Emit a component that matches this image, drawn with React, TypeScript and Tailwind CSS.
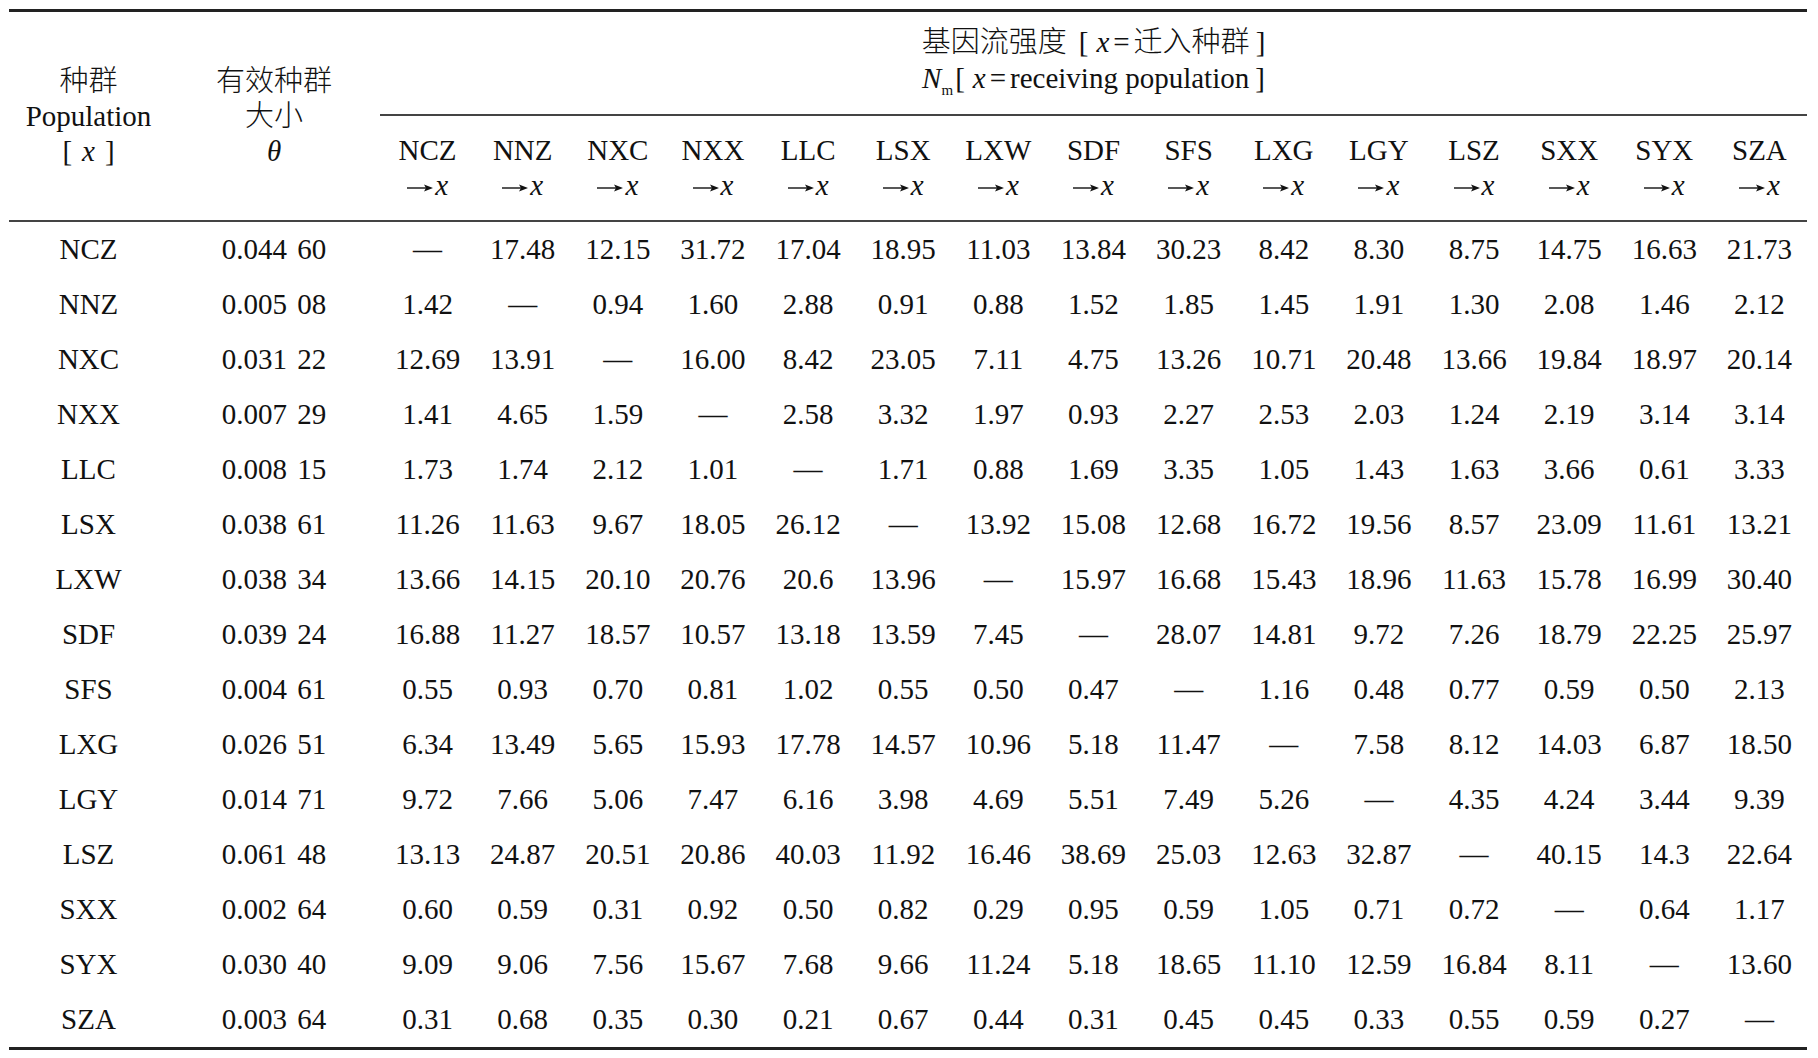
import React from "react";

const cols = ["NCZ", "NNZ", "NXC", "NXX", "LLC", "LSX", "LXW", "SDF", "SFS", "LXG", "LGY", "LSZ", "SXX", "SYX", "SZA"];

const D = "—";

const rows: [string, string, string[]][] = [
  ["NCZ", "0.044 60", [D, "17.48", "12.15", "31.72", "17.04", "18.95", "11.03", "13.84", "30.23", "8.42", "8.30", "8.75", "14.75", "16.63", "21.73"]],
  ["NNZ", "0.005 08", ["1.42", D, "0.94", "1.60", "2.88", "0.91", "0.88", "1.52", "1.85", "1.45", "1.91", "1.30", "2.08", "1.46", "2.12"]],
  ["NXC", "0.031 22", ["12.69", "13.91", D, "16.00", "8.42", "23.05", "7.11", "4.75", "13.26", "10.71", "20.48", "13.66", "19.84", "18.97", "20.14"]],
  ["NXX", "0.007 29", ["1.41", "4.65", "1.59", D, "2.58", "3.32", "1.97", "0.93", "2.27", "2.53", "2.03", "1.24", "2.19", "3.14", "3.14"]],
  ["LLC", "0.008 15", ["1.73", "1.74", "2.12", "1.01", D, "1.71", "0.88", "1.69", "3.35", "1.05", "1.43", "1.63", "3.66", "0.61", "3.33"]],
  ["LSX", "0.038 61", ["11.26", "11.63", "9.67", "18.05", "26.12", D, "13.92", "15.08", "12.68", "16.72", "19.56", "8.57", "23.09", "11.61", "13.21"]],
  ["LXW", "0.038 34", ["13.66", "14.15", "20.10", "20.76", "20.6", "13.96", D, "15.97", "16.68", "15.43", "18.96", "11.63", "15.78", "16.99", "30.40"]],
  ["SDF", "0.039 24", ["16.88", "11.27", "18.57", "10.57", "13.18", "13.59", "7.45", D, "28.07", "14.81", "9.72", "7.26", "18.79", "22.25", "25.97"]],
  ["SFS", "0.004 61", ["0.55", "0.93", "0.70", "0.81", "1.02", "0.55", "0.50", "0.47", D, "1.16", "0.48", "0.77", "0.59", "0.50", "2.13"]],
  ["LXG", "0.026 51", ["6.34", "13.49", "5.65", "15.93", "17.78", "14.57", "10.96", "5.18", "11.47", D, "7.58", "8.12", "14.03", "6.87", "18.50"]],
  ["LGY", "0.014 71", ["9.72", "7.66", "5.06", "7.47", "6.16", "3.98", "4.69", "5.51", "7.49", "5.26", D, "4.35", "4.24", "3.44", "9.39"]],
  ["LSZ", "0.061 48", ["13.13", "24.87", "20.51", "20.86", "40.03", "11.92", "16.46", "38.69", "25.03", "12.63", "32.87", D, "40.15", "14.3", "22.64"]],
  ["SXX", "0.002 64", ["0.60", "0.59", "0.31", "0.92", "0.50", "0.82", "0.29", "0.95", "0.59", "1.05", "0.71", "0.72", D, "0.64", "1.17"]],
  ["SYX", "0.030 40", ["9.09", "9.06", "7.56", "15.67", "7.68", "9.66", "11.24", "5.18", "18.65", "11.10", "12.59", "16.84", "8.11", D, "13.60"]],
  ["SZA", "0.003 64", ["0.31", "0.68", "0.35", "0.30", "0.21", "0.67", "0.44", "0.31", "0.45", "0.45", "0.33", "0.55", "0.59", "0.27", D]],
];

function Arrow() {
  return (
    <svg width="26" height="12" viewBox="0 0 26 12" className="inline-block align-[1px] mr-[2px]">
      <line x1="0" y1="6" x2="22" y2="6" stroke="#111" strokeWidth="1.4" />
      <path d="M17 2.5 L26 6 L17 9.5 L19 6 Z" fill="#111" />
    </svg>
  );
}

export default function App() {
  return (
    <div className="min-h-screen bg-white text-[#111]">
      <div className="pt-[9px] pl-[9px]">
        <div className="w-[1798px] border-t-[3px] border-b-[3px] border-[#222] font-['Liberation_Serif','Noto_Sans_CJK_SC',serif] text-[29px] leading-none">
          {/* Header */}
          <div className="flex h-[208px]">
            <div className="w-[159px] flex flex-col items-center justify-center leading-[35px]">
              <div className="font-light">种群</div>
              <div>Population</div>
              <div>
                [<span className="px-[10px]"><i>x</i></span>]
              </div>
            </div>
            <div className="w-[212px] flex flex-col items-center justify-center leading-[35px]">
              <div className="font-light">有效种群</div>
              <div className="font-light">大小</div>
              <div>
                <i>θ</i>
              </div>
            </div>
            <div className="w-[1427px] flex flex-col">
              <div className="h-[104px] border-b-2 border-[#444] flex flex-col items-center justify-center leading-[36px] pb-[2px]">
                <div className="whitespace-pre font-light">
                  基因流强度<span className="pl-[12px] pr-[8px]">[</span>
                  <i>x</i>
                  <span className="px-[4px]">=</span>迁入种群<span className="pl-[6px]">]</span>
                </div>
                <div className="whitespace-pre">
                  <i>N</i>
                  <span className="text-[15px] relative top-[7px]">m</span>
                  <span className="pl-[2px] pr-[8px]">[</span>
                  <i>x</i>
                  <span className="px-[4px]">=</span>receiving population<span className="pl-[6px]">]</span>
                </div>
              </div>
              <div className="flex-1 grid grid-cols-15 items-center content-center leading-[35px]">
                {cols.map((c) => (
                  <div key={c} className="text-center">
                    <div>{c}</div>
                    <div>
                      <Arrow />
                      <i>x</i>
                    </div>
                  </div>
                ))}
              </div>
            </div>
          </div>
          {/* Body */}
          <div className="border-t-2 border-[#444]">
            {rows.map(([name, theta, vals]) => (
              <div key={name} className="flex h-[55px] items-center">
                <div className="w-[159px] text-center">{name}</div>
                <div className="w-[212px] text-center whitespace-pre [word-spacing:3px]">{theta}</div>
                <div className="w-[1427px] grid grid-cols-15">
                  {vals.map((v, i) => (
                    <div key={i} className="text-center">
                      {v}
                    </div>
                  ))}
                </div>
              </div>
            ))}
          </div>
        </div>
      </div>
    </div>
  );
}
